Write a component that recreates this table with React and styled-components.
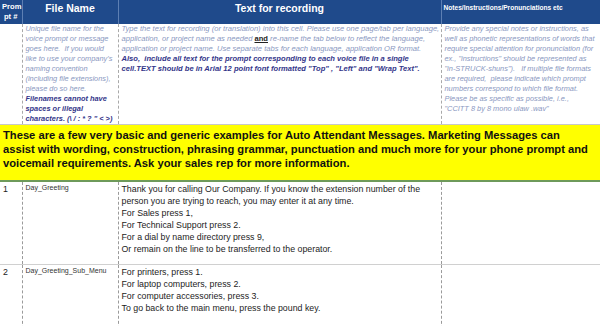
import React from "react";
import styled, { createGlobalStyle } from "styled-components";

const Global = createGlobalStyle`
  html, body { margin: 0; padding: 0; background: #fff; }
  body { font-family: "Liberation Sans", Arial, sans-serif; overflow: hidden; }
`;

const Sheet = styled.table`
  width: 600px;
  border-collapse: collapse;
  table-layout: fixed;
`;

const HeadRow = styled.tr`
  height: 24px;
`;

const HeadCell = styled.th`
  background: #1f4a8b;
  color: #fff;
  padding: ${(p) => p.$pt || 0}px 2px 0 2px;
  border-right: 1px solid #5d7fb3;
  font-weight: bold;
  font-size: ${(p) => p.$size || 10.5}px;
  line-height: ${(p) => p.$lh || 12}px;
  text-align: ${(p) => p.$align || "center"};
  vertical-align: ${(p) => p.$valign || "middle"};
  &:last-child { border-right: none; }
`;

const InfoRow = styled.tr`
  height: 96px;
`;

const InfoCell = styled.td`
  vertical-align: top;
  padding: 0 2px 0 3px;
  border-right: 1px dashed #a9a9a9;
  border-bottom: 1px solid #c8c8c8;
  font-size: ${(p) => p.$size || 7.4}px;
  line-height: 10px;
  font-style: italic;
  color: #8a98bf;
  &:last-child { border-right: none; }
`;

const Line = styled.div`
  white-space: nowrap;
`;

const Strong = styled.span`
  font-weight: bold;
  color: #33358a;
`;

const Underlined = styled.span`
  font-weight: bold;
  font-style: normal;
  color: #222;
  text-decoration: underline;
`;

const BannerCell = styled.td`
  background: #ffff00;
  border-top: 1px solid #4d6b3a;
  border-bottom: 2px solid #6e9a5a;
  padding: 3px 3px 10px 3px;
  font-weight: bold;
  font-size: 11.2px;
  line-height: 14px;
  color: #111;
`;

const DataRow = styled.tr`
  height: ${(p) => p.$h}px;
`;

const DataCell = styled.td`
  vertical-align: top;
  padding: 1px 2px 0 3px;
  border-right: 1px dashed #9a9a9a;
  border-bottom: 1px solid #d0d0d0;
  font-size: ${(p) => p.$size || 8.8}px;
  line-height: ${(p) => p.$lh || 12}px;
  color: ${(p) => p.$color || "#1c1c1c"};
  &:last-child { border-right: none; }
`;

const Lines = ({ items }) => items.map((t, i) => <div key={i}>{t}</div>);

const rows = [
  {
    n: "1",
    name: "Day_Greeting",
    h: 83,
    text: [
      "Thank you for calling Our Company. If you know the extension number of the",
      "person you are trying to reach, you may enter it at any time.",
      "For Sales press 1,",
      "For Technical Support press 2.",
      "For a dial by name directory press 9,",
      "Or remain on the line to be transferred to the operator.",
    ],
  },
  {
    n: "2",
    name: "Day_Greeting_Sub_Menu",
    h: 70,
    text: [
      "For printers, press 1.",
      "For laptop computers, press 2.",
      "For computer accessories, press 3.",
      "To go back to the main menu, press the pound key.",
    ],
  },
];

const banner = [
  "These are a few very basic and generic examples for Auto Attendant Messages. Marketing Messages can",
  "assist with wording, construction, phrasing grammar, punctuation and much more for your phone prompt and",
  "voicemail requirements. Ask your sales rep for more information.",
];

export default function App() {
  return (
    <>
      <Global />
      <Sheet>
        <colgroup>
          <col style={{ width: 22 }} />
          <col style={{ width: 96 }} />
          <col style={{ width: 323 }} />
          <col style={{ width: 159 }} />
        </colgroup>
        <thead>
          <HeadRow>
            <HeadCell $size={7.6} $lh={10}>Prom pt #</HeadCell>
            <HeadCell $valign="top" $pt={2}>File Name</HeadCell>
            <HeadCell $valign="top" $pt={2}>Text for recording</HeadCell>
            <HeadCell $size={6.6} $align="left" $valign="top" $pt={2}>
              Notes/Instructions/Pronunciations etc
            </HeadCell>
          </HeadRow>
        </thead>
        <tbody>
          <InfoRow>
            <InfoCell />
            <InfoCell>
              Unique file name for the voice prompt or message goes here.&nbsp; If you would
              like to use your company's naming convention (including file extensions), please do
              so here. <Strong>Filenames cannot have spaces or illegal characters. (\ / : * ? " &lt; &gt;)</Strong>
            </InfoCell>
            <InfoCell $size={7.6}>
              <Line>Type the text for recording (or translation) into this cell. Please use one page/tab per language,</Line>
              <Line>
                application, or project name as needed <Underlined>and</Underlined> re-name the tab below to reflect the language,
              </Line>
              <Line>application or project name. Use separate tabs for each language, application OR format.</Line>
              <Line><Strong>Also,&nbsp; include all text for the prompt corresponding to each voice file in a single</Strong></Line>
              <Line><Strong>cell.TEXT should be in Arial 12 point font formatted "Top" , "Left" and "Wrap Text".</Strong></Line>
            </InfoCell>
            <InfoCell>
              Provide any special notes or instructions, as well as phonetic representations of words
              that require special attention for pronunciation (for ex., "instructions" should be
              represented as "in-STRUCK-shuns").&nbsp;&nbsp; If multiple file formats are required,&nbsp; please
              indicate which prompt numbers correspond to which file format. Please be as specific as
              possible, i.e.,
              <br />
              "CCITT 8 by 8 mono ulaw .wav"
            </InfoCell>
          </InfoRow>
          <tr>
            <BannerCell colSpan={4}>
              {banner.map((t, i) => (
                <Line key={i}>{t}</Line>
              ))}
            </BannerCell>
          </tr>
          {rows.map((r) => (
            <DataRow key={r.n} $h={r.h}>
              <DataCell>{r.n}</DataCell>
              <DataCell $size={7} $lh={10} $color="#333">{r.name}</DataCell>
              <DataCell>
                <Lines items={r.text} />
              </DataCell>
              <DataCell />
            </DataRow>
          ))}
        </tbody>
      </Sheet>
    </>
  );
}
